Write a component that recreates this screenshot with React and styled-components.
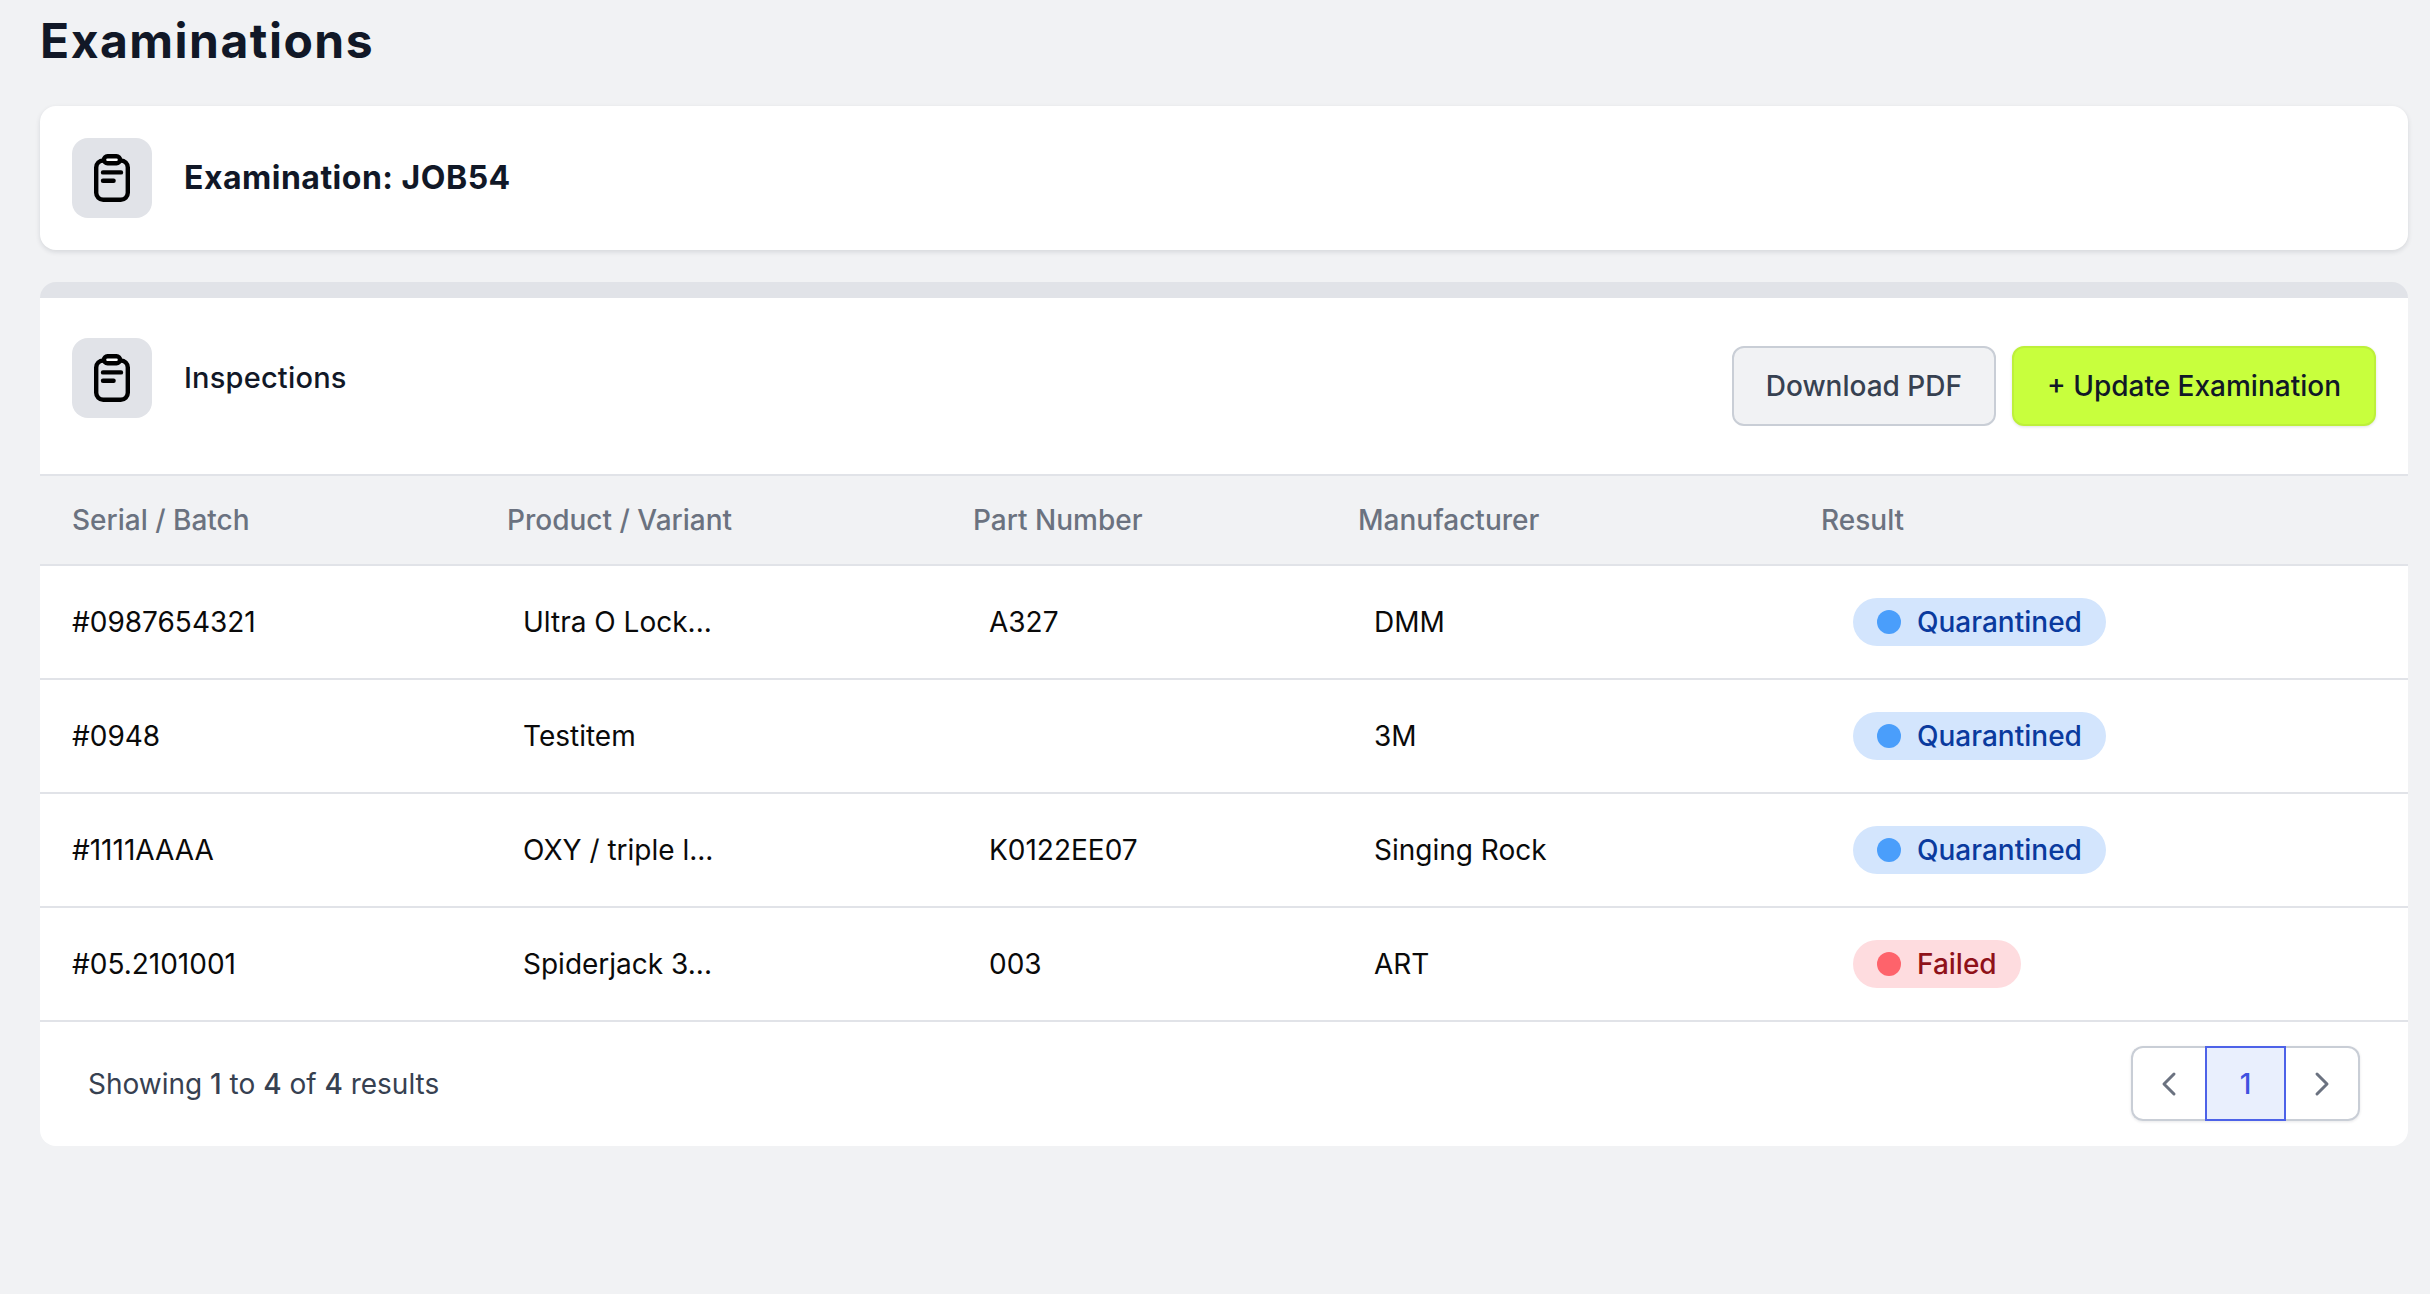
import React from 'react';
import styled, { createGlobalStyle } from 'styled-components';
import { ChevronLeft, ChevronRight } from 'lucide-react';

const GlobalStyle = createGlobalStyle`
    html, body {
        margin: 0;
        padding: 0;
        background-color: #f1f2f4;
    }
    * {
        box-sizing: border-box;
    }
`;

const Page = styled.div`
    min-height: 1294px;
    padding: 0 22px 0 40px;
    font-family: Inter, "Liberation Sans", sans-serif;
    font-size: 28px;
`;

const Title = styled.h1`
    margin: 0;
    height: 106px;
    padding-top: 10px;
    font-size: 48px;
    line-height: 62px;
    font-weight: 700;
    color: #111827;
    letter-spacing: 1.5px;
`;

const Card = styled.section`
    background-color: #fff;
    border-radius: 16px;
`;

const HeadCard = styled(Card)`
    height: 144px;
    margin-bottom: 32px;
    padding: 32px;
    display: flex;
    align-items: center;
    gap: 32px;
    box-shadow: 0 2px 5px rgba(17, 24, 39, 0.12);
`;

const ListCard = styled(Card)`
    height: 864px;
    border-top: 16px solid #e1e3e8;
    overflow: hidden;
`;

const IconTile = styled.div`
    width: 80px;
    height: 80px;
    flex: none;
    display: flex;
    align-items: center;
    justify-content: center;
    border-radius: 16px;
    background-color: #e1e3e8;
`;

const HeadTitle = styled.h2`
    margin: 0 0 2px;
    font-size: 32px;
    font-weight: 700;
    color: #111827;
    letter-spacing: 0.5px;
`;

const Toolbar = styled.div`
    height: 176px;
    padding: 40px 32px 0;
    display: flex;
    justify-content: space-between;
    align-items: flex-start;
`;

const ToolbarTitle = styled.div`
    display: flex;
    align-items: center;
    gap: 32px;
`;

const SectionName = styled.h3`
    margin: 0 0 2px;
    font-size: 29px;
    font-weight: 500;
    color: #111827;
    letter-spacing: 0.2px;
`;

const Actions = styled.div`
    display: flex;
    gap: 16px;
    padding-top: 8px;
`;

const Button = styled.button`
    height: 80px;
    padding: 0 ${(p) => (p.$primary ? 33 : 32)}px;
    border-radius: 12px;
    font-family: inherit;
    font-size: 28px;
    font-weight: 500;
    color: ${(p) => (p.$primary ? '#111827' : '#374151')};
    background-color: ${(p) => (p.$primary ? '#c8ff3d' : '#f1f2f4')};
    border: 2px solid ${(p) => (p.$primary ? '#bdf03a' : '#c9ced6')};
    box-shadow: ${(p) => (p.$primary ? '0 1px 3px rgba(17, 24, 39, 0.12)' : 'none')};
`;

const columns = '32px 435px 466px 385px 463px 1fr';

const HeaderRow = styled.div`
    display: grid;
    grid-template-columns: ${columns};
    align-items: center;
    height: 92px;
    border-top: 2px solid #e1e3e8;
    border-bottom: 2px solid #e1e3e8;
    background-color: #f1f2f4;
    font-weight: 500;
    color: #6b7280;
`;

const Row = styled.div`
    display: grid;
    grid-template-columns: ${columns};
    align-items: center;
    height: 114px;
    border-bottom: 2px solid #e1e3e8;
    color: #0a0a0a;
`;

const Cell = styled.div`
    padding-left: ${(p) => p.$indent || 0}px;
    white-space: nowrap;
`;

const Badge = styled.span`
    display: inline-flex;
    align-items: center;
    gap: 16px;
    height: 48px;
    padding: 0 24px;
    border-radius: 24px;
    font-weight: 500;
    background-color: ${(p) => (p.$failed ? '#fedcdf' : '#d3e5fd')};
    color: ${(p) => (p.$failed ? '#8f1119' : '#0a3a9e')};
`;

const Dot = styled.i`
    width: 24px;
    height: 24px;
    border-radius: 50%;
    background-color: ${(p) => (p.$failed ? '#fe636b' : '#4a9efb')};
`;

const Footer = styled.div`
    height: 123px;
    padding: 0 48px;
    display: flex;
    align-items: center;
    justify-content: space-between;
    color: #374151;
`;

const Strong = styled.span`
    font-weight: 500;
`;

const Pager = styled.nav`
    display: flex;
    height: 75px;
    border-radius: 12px;
    box-shadow: 0 1px 3px rgba(17, 24, 39, 0.1);
`;

const PageArrow = styled.button`
    width: 74px;
    padding: 0;
    display: flex;
    align-items: center;
    justify-content: center;
    background-color: #fff;
    color: #6b7280;
    border: 2px solid #c9ced6;
    border-${(p) => (p.$side === 'left' ? 'right' : 'left')}: 0;
    border-radius: ${(p) => (p.$side === 'left' ? '12px 0 0 12px' : '0 12px 12px 0')};
`;

const PageNumber = styled.button`
    width: 81px;
    padding: 0;
    font-family: inherit;
    font-size: 28px;
    font-weight: 500;
    color: #3f51e0;
    background-color: #e9effd;
    border: 2px solid #4d62e8;
`;

const rows = [
    { serial: '#0987654321', product: 'Ultra O Lock...', part: 'A327', maker: 'DMM', result: 'Quarantined' },
    { serial: '#0948', product: 'Testitem', part: '', maker: '3M', result: 'Quarantined' },
    { serial: '#1111AAAA', product: 'OXY / triple l...', part: 'K0122EE07', maker: 'Singing Rock', result: 'Quarantined' },
    { serial: '#05.2101001', product: 'Spiderjack 3...', part: '003', maker: 'ART', result: 'Failed' },
];

function ClipboardIcon() {
    return (
        <svg width="36" height="48" viewBox="0 0 36 48" fill="none" stroke="#000" strokeWidth="4.4" strokeLinecap="round">
            <rect x="2.2" y="6.5" width="31.6" height="39.3" rx="7" />
            <rect x="10" y="2.2" width="16" height="7" rx="3.5" fill="#fff" />
            <path d="M9 18.4H27M9 26.7H19.6" />
        </svg>
    );
}

export default function App() {
    return (
        <Page>
            <GlobalStyle />
            <Title>Examinations</Title>
            <HeadCard>
                <IconTile><ClipboardIcon /></IconTile>
                <HeadTitle>Examination: JOB54</HeadTitle>
            </HeadCard>
            <ListCard>
                <Toolbar>
                    <ToolbarTitle>
                        <IconTile><ClipboardIcon /></IconTile>
                        <SectionName>Inspections</SectionName>
                    </ToolbarTitle>
                    <Actions>
                        <Button>Download PDF</Button>
                        <Button $primary>+ Update Examination</Button>
                    </Actions>
                </Toolbar>
                <HeaderRow>
                    <span />
                    <Cell>Serial / Batch</Cell>
                    <Cell>Product / Variant</Cell>
                    <Cell>Part Number</Cell>
                    <Cell>Manufacturer</Cell>
                    <Cell>Result</Cell>
                </HeaderRow>
                {rows.map((row) => {
                    const failed = row.result === 'Failed';
                    return (
                        <Row key={row.serial}>
                            <span />
                            <Cell>{row.serial}</Cell>
                            <Cell $indent={16}>{row.product}</Cell>
                            <Cell $indent={16}>{row.part}</Cell>
                            <Cell $indent={16}>{row.maker}</Cell>
                            <Cell $indent={32}>
                                <Badge $failed={failed}>
                                    <Dot $failed={failed} />
                                    {row.result}
                                </Badge>
                            </Cell>
                        </Row>
                    );
                })}
                <Footer>
                    <div>
                        Showing <Strong>1</Strong> to <Strong>4</Strong> of <Strong>4</Strong> results
                    </div>
                    <Pager>
                        <PageArrow $side="left"><ChevronLeft size={40} strokeWidth={1.8} /></PageArrow>
                        <PageNumber>1</PageNumber>
                        <PageArrow $side="right"><ChevronRight size={40} strokeWidth={1.8} /></PageArrow>
                    </Pager>
                </Footer>
            </ListCard>
        </Page>
    );
}
